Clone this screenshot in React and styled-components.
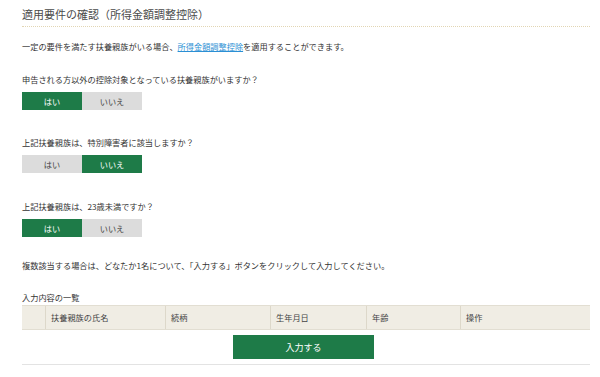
import React from "react";
import styled, { createGlobalStyle } from "styled-components";

const Global = createGlobalStyle`
  html, body { margin: 0; padding: 0; background: #fff; }
  body { font-family: "Noto Sans CJK JP", "Noto Sans", sans-serif; color: #333; }
`;

const Page = styled.div`
  width: 568px;
  padding-left: 22px;
`;

const Title = styled.h2`
  margin: 0;
  padding: 6px 0 4px;
  font-size: 11px;
  line-height: 16px;
  font-weight: normal;
  color: #4a4a4a;
  border-bottom: 1px dotted #e2d6b4;
`;

const Text = styled.p`
  margin: ${(p) => p.$mt || 0}px 0 0;
  font-size: 8.2px;
  line-height: 12px;
  color: #333;
`;

const Link = styled.a`
  color: #2b8fd4;
  text-decoration: underline;
`;

const Question = styled.div`
  margin-top: ${(p) => p.$mt}px;
`;

const Choices = styled.div`
  display: flex;
  margin-top: 7px;
`;

const Choice = styled.button`
  width: 60px;
  height: 18px;
  border: none;
  padding: 0;
  margin: 0;
  font-family: inherit;
  font-size: 8.2px;
  line-height: 18px;
  text-align: center;
  background: ${(p) => (p.$active ? "#1e7b48" : "#dcdcdc")};
  color: ${(p) => (p.$active ? "#fff" : "#444")};
`;

const Table = styled.div`
  display: grid;
  grid-template-columns: 23px 120px 105px 96px 94px 130px;
  margin-top: 2px;
  height: 25px;
  background: #f0ede4;
  border-top: 1px solid #e2ded2;
  border-bottom: 1px solid #e2ded2;
  box-sizing: border-box;
`;

const Th = styled.div`
  font-size: 8.2px;
  line-height: 23px;
  color: #444;
  padding-left: 5px;
  border-left: ${(p) => (p.$first ? "none" : "1px solid #ddd8ca")};
`;

const Footer = styled.div`
  display: flex;
  justify-content: center;
  padding: 5px 5px 5px 0;
  border-bottom: 1px solid #e3e3e3;
`;

const Submit = styled.button`
  width: 141px;
  height: 24px;
  border: none;
  background: #1e7b48;
  color: #fff;
  font-family: inherit;
  font-size: 9px;
  padding: 0;
`;

const YesNo = ({ yes }) => (
  <Choices>
    <Choice $active={yes}>はい</Choice>
    <Choice $active={!yes}>いいえ</Choice>
  </Choices>
);

export default function App() {
  return (
    <>
      <Global />
      <Page>
        <Title>適用要件の確認（所得金額調整控除）</Title>
        <Text $mt={13}>
          一定の要件を満たす扶養親族がいる場合、<Link>所得金額調整控除</Link>を適用することができます。
        </Text>
        <Question $mt={21}>
          <Text>申告される方以外の控除対象となっている扶養親族がいますか？</Text>
          <YesNo yes />
        </Question>
        <Question $mt={26}>
          <Text>上記扶養親族は、特別障害者に該当しますか？</Text>
          <YesNo yes={false} />
        </Question>
        <Question $mt={27}>
          <Text>上記扶養親族は、23歳未満ですか？</Text>
          <YesNo yes />
        </Question>
        <Text $mt={22}>
          複数該当する場合は、どなたか1名について、「入力する」ボタンをクリックして入力してください。
        </Text>
        <Text $mt={20}>入力内容の一覧</Text>
        <Table>
          <Th $first />
          <Th>扶養親族の氏名</Th>
          <Th>続柄</Th>
          <Th>生年月日</Th>
          <Th>年齢</Th>
          <Th>操作</Th>
        </Table>
        <Footer>
          <Submit>入力する</Submit>
        </Footer>
      </Page>
    </>
  );
}
